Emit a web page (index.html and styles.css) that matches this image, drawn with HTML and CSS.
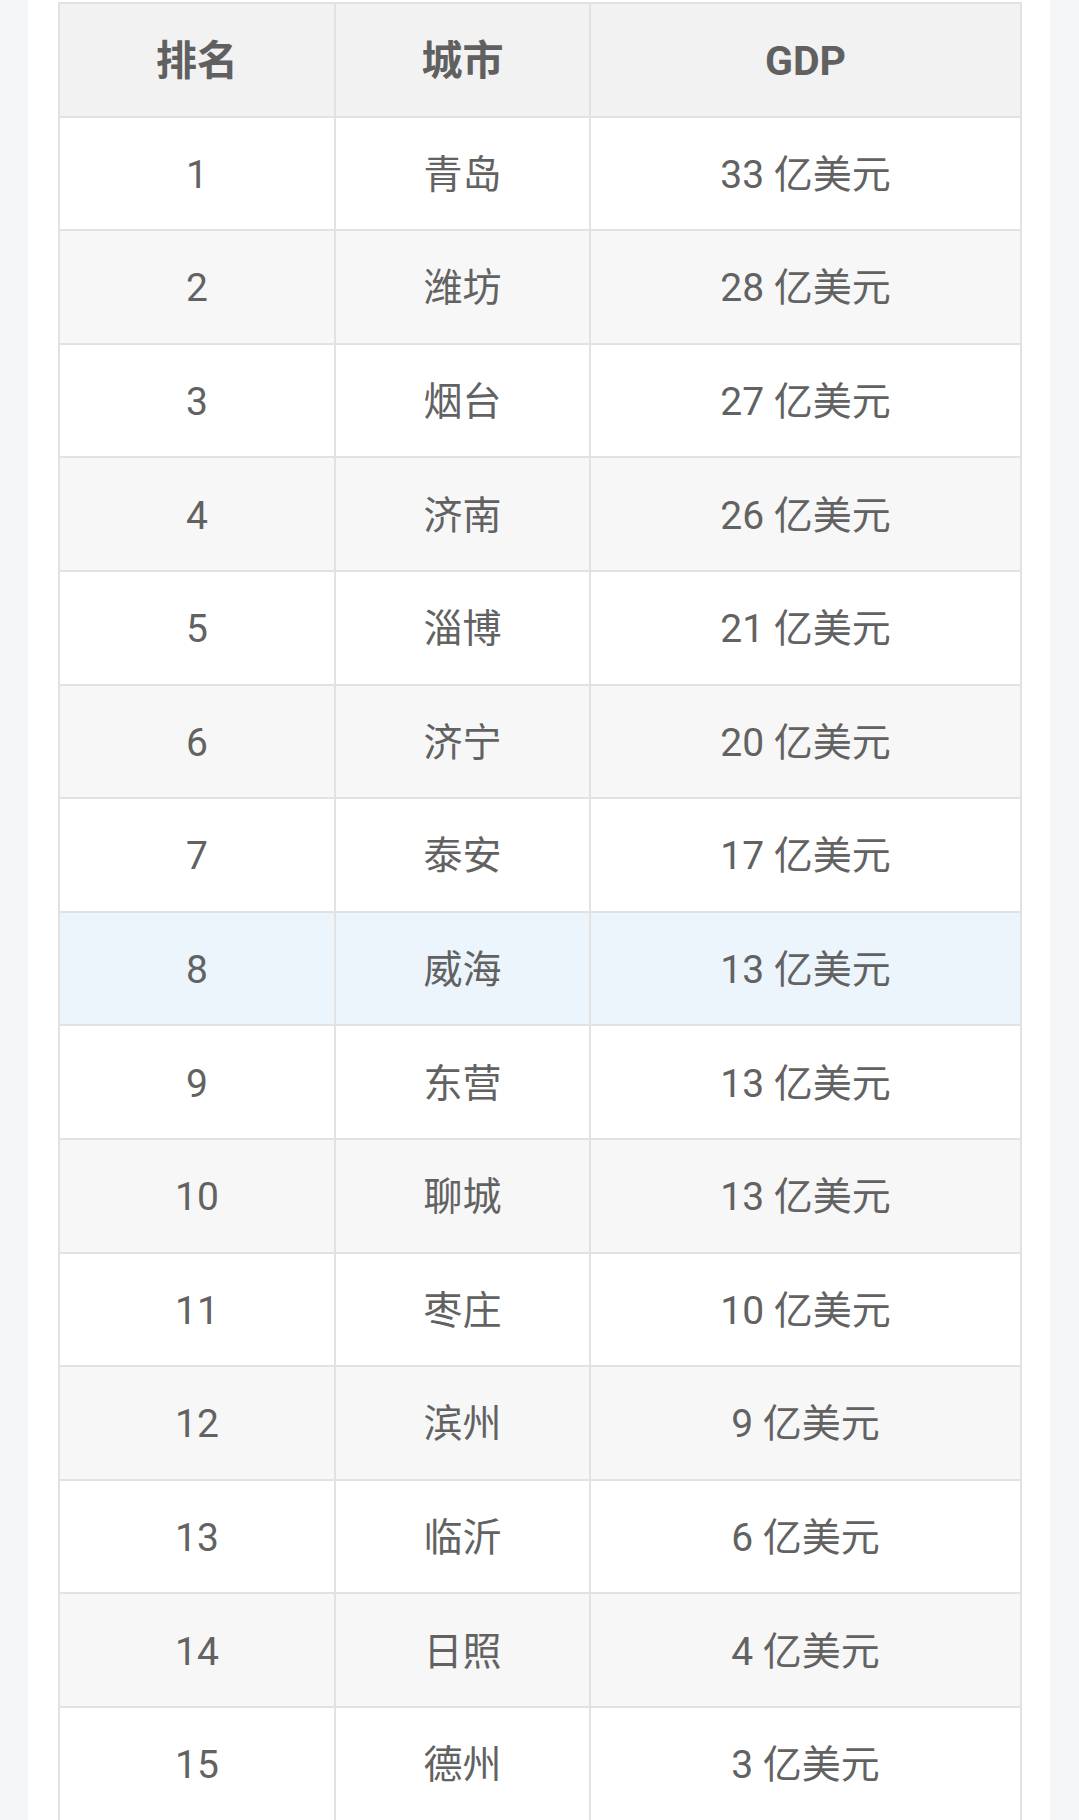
FILE: index.html
```html
<!DOCTYPE html>
<html lang="zh-CN">
<head>
<meta charset="utf-8">
<title>山东城市 GDP 排名</title>
<link rel="stylesheet" href="styles.css">
</head>
<body>
<div class="page">
  <div class="sheet">
    <table class="rank">
      <colgroup>
        <col class="c-rank">
        <col class="c-city">
        <col class="c-gdp">
      </colgroup>
      <thead>
        <tr><th>排名</th><th>城市</th><th>GDP</th></tr>
      </thead>
      <tbody>
        <tr><td>1</td><td>青岛</td><td>33 亿美元</td></tr>
        <tr><td>2</td><td>潍坊</td><td>28 亿美元</td></tr>
        <tr><td>3</td><td>烟台</td><td>27 亿美元</td></tr>
        <tr><td>4</td><td>济南</td><td>26 亿美元</td></tr>
        <tr><td>5</td><td>淄博</td><td>21 亿美元</td></tr>
        <tr><td>6</td><td>济宁</td><td>20 亿美元</td></tr>
        <tr><td>7</td><td>泰安</td><td>17 亿美元</td></tr>
        <tr class="active"><td>8</td><td>威海</td><td>13 亿美元</td></tr>
        <tr><td>9</td><td>东营</td><td>13 亿美元</td></tr>
        <tr><td>10</td><td>聊城</td><td>13 亿美元</td></tr>
        <tr><td>11</td><td>枣庄</td><td>10 亿美元</td></tr>
        <tr><td>12</td><td>滨州</td><td>9 亿美元</td></tr>
        <tr><td>13</td><td>临沂</td><td>6 亿美元</td></tr>
        <tr><td>14</td><td>日照</td><td>4 亿美元</td></tr>
        <tr><td>15</td><td>德州</td><td>3 亿美元</td></tr>
      </tbody>
    </table>
  </div>
</div>
</body>
</html>
```
FILE: styles.css
```css
html, body {
  margin: 0;
  padding: 0;
  background: #f4f5f7;
}
.page {
  min-height: 1820px;
  background: #f4f5f7;
  padding: 0 29px 0 28px;
}
.sheet {
  background: #ffffff;
  min-height: 1820px;
  padding: 2px 30px 0 30px;
  box-sizing: border-box;
}
.rank {
  width: 962px;
  border-collapse: collapse;
  table-layout: fixed;
  font-family: Roboto, "Noto Sans CJK SC", "Noto Sans", sans-serif;
  color: #626262;
  text-align: center;
}
.c-rank { width: 276px; }
.c-city { width: 255px; }
.c-gdp { width: 431px; }
.rank th,
.rank td {
  border: 2px solid #e2e2e2;
  height: 107.6px;
  padding: 4px 0 0 0;
  font-size: 39px;
  line-height: 1;
}
.rank th {
  background: #f2f2f2;
  font-weight: 700;
  font-size: 41px;
  color: #606060;
}
.rank td {
  font-weight: 400;
}
.rank tbody tr:nth-child(even) td {
  background: #f7f7f7;
}
.rank tbody tr:nth-child(odd) td {
  background: #ffffff;
}
.rank tbody tr.active td {
  background: #edf5fc;
}
```
